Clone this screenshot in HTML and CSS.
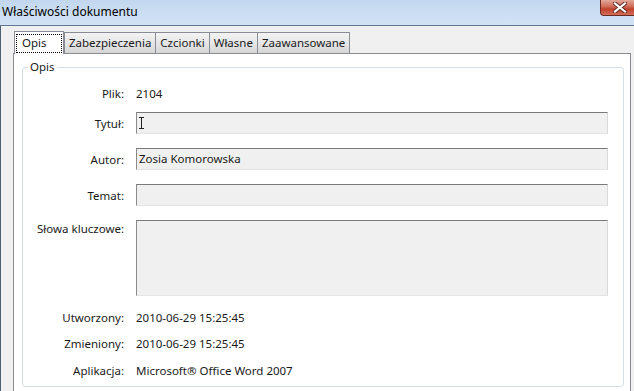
FILE: index.html
```html
<!DOCTYPE html>
<html lang="pl">
  <head>
    <meta charset="UTF-8" />
    <title>Właściwości dokumentu</title>
    <link rel="stylesheet" href="styles.css">
  </head>
  <body>
    <div class="titlebar">
      <span class="title">Właściwości dokumentu</span>
      <div class="close">
        <svg width="14" height="11" viewBox="0 0 14 11">
          <path d="M2 1.5 L12 9.5 M12 1.5 L2 9.5" stroke="#5a2a22" stroke-width="4" stroke-linecap="square" />
          <path d="M2 1.5 L12 9.5 M12 1.5 L2 9.5" stroke="#fff" stroke-width="2.2" stroke-linecap="square" />
        </svg>
      </div>
    </div>

    <div class="frame">
      <div class="tabs">
        <div class="tab active"><span class="focus">Opis</span></div>
        <div class="tab">Zabezpieczenia</div>
        <div class="tab">Czcionki</div>
        <div class="tab">Własne</div>
        <div class="tab">Zaawansowane</div>
      </div>

      <div class="panel">
        <fieldset class="group">
          <legend>Opis</legend>
          <div class="row plik"><span class="label">Plik:</span><span>2104</span></div>
          <div class="row field title-row">
            <span class="label">Tytuł:</span>
            <div class="box">
              <!-- kursor myszy nad polem -->
              <svg class="ibeam" width="7" height="12" viewBox="0 0 7 12">
                <path d="M1 0.5 H6 M3.5 0.5 V11.5 M1 11.5 H6" stroke="#222" stroke-width="1" fill="none" />
              </svg>
            </div>
          </div>
          <div class="row field"><span class="label">Autor:</span><div class="box">Zosia Komorowska</div></div>
          <div class="row field"><span class="label">Temat:</span><div class="box"></div></div>
          <div class="row area"><span class="label">Słowa kluczowe:</span><div class="box tall"></div></div>
          <div class="row created"><span class="label">Utworzony:</span><span>2010-06-29 15:25:45</span></div>
          <div class="row changed"><span class="label">Zmieniony:</span><span>2010-06-29 15:25:45</span></div>
          <div class="row app"><span class="label">Aplikacja:</span><span>Microsoft® Office Word 2007</span></div>
        </fieldset>
      </div>
    </div>
  </body>
</html>
```

FILE: styles.css
```css
body {
  margin: 0;
  width: 634px;
  height: 391px;
  overflow: hidden;
  background: #f0f0f0;
  font-family: "Noto Sans", "Open Sans", sans-serif;
  font-size: 11.5px;
  color: #1a1a1a;
}

.titlebar {
  position: relative;
  height: 25px;
  border-bottom: 1px solid #5f7894;
  background: linear-gradient(to bottom, #c2d7ef, #d3e3f5);
}

.title {
  display: block;
  padding-left: 2px;
  line-height: 23px;
  font-size: 12px;
  color: #000;
}

.close {
  position: absolute;
  left: 600px;
  top: 0;
  width: 44px;
  height: 16px;
  border: 1px solid #6b2a20;
  border-top: none;
  border-radius: 0 0 0 4px;
  background: linear-gradient(to bottom, #e2a89a 0%, #cf6a55 45%, #c0412b 60%, #d2705c 100%);
  display: flex;
  align-items: center;
  padding-left: 12px;
  box-sizing: border-box;
}

.frame {
  border-left: 1px solid #4d5f75;
  height: 365px;
}

.tabs {
  display: flex;
  align-items: flex-end;
  padding: 5px 0 0 13px;
  height: 22px;
}

.tab {
  height: 21px;
  line-height: 20px;
  padding: 0 4px;
  border: 1px solid #898c95;
  border-bottom: none;
  margin-right: -1px;
  background: linear-gradient(to bottom, #f3f3f3, #e6e6e6 50%, #d6d6d6);
  box-sizing: border-box;
}

.tab.active {
  position: relative;
  z-index: 1;
  width: 50px;
  height: 23px;
  margin-right: 0;
  margin-bottom: -1px;
  padding: 2px 1px 0;
  background: #fff;
}

.focus {
  display: block;
  height: 17px;
  line-height: 16px;
  padding: 0 5px;
  border: 1px dotted #000;
}

.panel {
  margin-left: 12px;
  width: 618px;
  height: 340px;
  background: #fff;
  border: 1px solid #898c95;
  box-sizing: border-box;
  padding-top: 5px;
}

.group {
  margin: 0 0 0 8px;
  width: 602px;
  padding: 8px 0 6px 0;
  border: 1px solid #d5dfe5;
  border-radius: 3px;
  box-sizing: border-box;
}

.group legend {
  margin-left: 5px;
  padding: 0 2px;
  line-height: 16px;
}

.row {
  display: flex;
  align-items: center;
  height: 20px;
}

.label {
  width: 101px;
  margin-right: 12px;
  text-align: right;
}

.row.field {
  height: 22px;
  margin-top: 14px;
}

.row.title-row {
  margin-top: 9px;
}

.row.area {
  height: 76px;
  margin-top: 14px;
  align-items: flex-start;
}

.row.area .label {
  padding-top: 1px;
}

.row.created { margin-top: 11px; }
.row.changed { margin-top: 6px; }
.row.app { margin-top: 7px; }

.box {
  width: 472px;
  height: 22px;
  box-sizing: border-box;
  padding-left: 2px;
  line-height: 20px;
  background: #f0f0f0;
  border: 1px solid;
  border-color: #7a7a7a #dadada #e4e4e4 #8a8a8a;
}

.box.tall {
  height: 76px;
}

.ibeam {
  display: block;
  margin: 4px 0 0 -1px;
}
```
